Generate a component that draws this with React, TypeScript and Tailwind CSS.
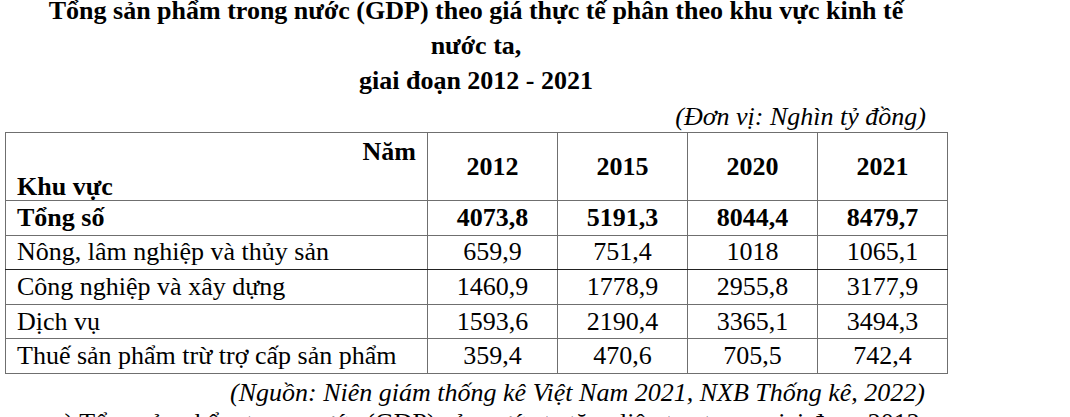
const years = ["2012", "2015", "2020", "2021"];

const rows: { name: string; values: string[]; bold?: boolean }[] = [
  { name: "Tổng số", values: ["4073,8", "5191,3", "8044,4", "8479,7"], bold: true },
  { name: "Nông, lâm nghiệp và thủy sản", values: ["659,9", "751,4", "1018", "1065,1"] },
  { name: "Công nghiệp và xây dựng", values: ["1460,9", "1778,9", "2955,8", "3177,9"] },
  { name: "Dịch vụ", values: ["1593,6", "2190,4", "3365,1", "3494,3"] },
  { name: "Thuế sản phẩm trừ trợ cấp sản phẩm", values: ["359,4", "470,6", "705,5", "742,4"] },
];

export default function App() {
  return (
    <div className="w-[1070px] h-[417px] overflow-hidden bg-white text-black font-['Liberation_Serif','Times_New_Roman',serif] text-[26px]">
      <div className="ml-[5px] w-[942px]">
        <h1 className="-mt-[7px] text-center font-bold leading-[35px]">
          Tổng sản phẩm trong nước (GDP) theo giá thực tế phân theo khu vực kinh tế
          <br />
          nước ta,
          <br />
          giai đoạn 2012 - 2021
        </h1>
        <p className="mt-[4px] pr-[21px] text-right italic leading-[30px]">(Đơn vị: Nghìn tỷ đồng)</p>

        <table className="w-[942px] table-fixed border-collapse">
          <colgroup>
            <col className="w-[422px]" />
            <col className="w-[130px]" />
            <col className="w-[130px]" />
            <col className="w-[130px]" />
            <col className="w-[130px]" />
          </colgroup>
          <thead>
            <tr className="h-[68px]">
              <th className="border border-[#6f6f6f] p-0 align-top font-bold">
                <div className="flex h-[67px] flex-col justify-between px-[11px]">
                  <span className="pt-[4px] text-right leading-[30px]">Năm</span>
                  <span className="text-left leading-[26px]">Khu vực</span>
                </div>
              </th>
              {years.map((y) => (
                <th key={y} className="border border-[#6f6f6f] p-0 text-center align-middle font-bold leading-[30px]">
                  {y}
                </th>
              ))}
            </tr>
          </thead>
          <tbody>
            {rows.map((r, i) => (
              <tr key={r.name} className={`h-[34.6px] ${r.bold ? "font-bold" : ""}`}>
                <td className={`border border-[#6f6f6f] px-[11px] py-0 leading-[30px] ${i === 1 ? "border-b-[#222]" : ""}`}>
                  {r.name}
                </td>
                {r.values.map((v, j) => (
                  <td
                    key={j}
                    className={`border border-[#6f6f6f] p-0 text-center leading-[30px] ${i === 1 ? "border-b-[#222]" : ""}`}
                  >
                    {v}
                  </td>
                ))}
              </tr>
            ))}
          </tbody>
        </table>

        <p className="mt-[4px] pr-[22px] text-right italic leading-[30px]">
          (Nguồn: Niên giám thống kê Việt Nam 2021, NXB Thống kê, 2022)
        </p>
        <p className="pl-[48px] leading-[30px]">
          a) Tổng sản phẩm trong nước (GDP) của nước ta tăng liên tục trong giai đoạn 2012 -{"\u00a0"}2021.
        </p>
      </div>
    </div>
  );
}
